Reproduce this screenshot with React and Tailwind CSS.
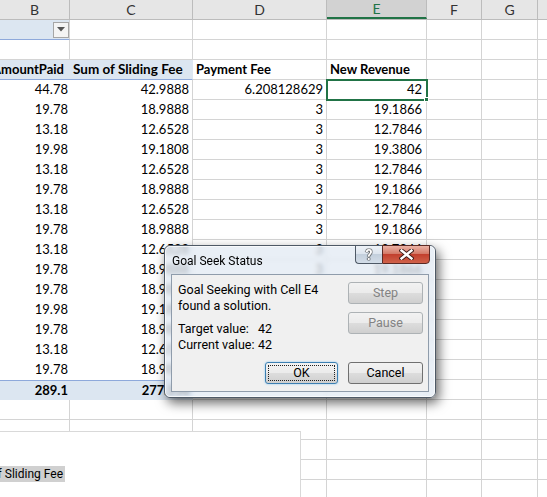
import React from 'react';

const W = ['w-[70px]', 'w-[123px]', 'w-[134px]', 'w-[100px]', 'w-[55px]', 'w-[56px]', 'w-[60px]'];
const LETTERS = ['B', 'C', 'D', 'E', 'F', 'G', 'H'];

const data = [
  ['44.78', '42.9888', '6.208128629', '42'],
  ['19.78', '18.9888', '3', '19.1866'],
  ['13.18', '12.6528', '3', '12.7846'],
  ['19.98', '19.1808', '3', '19.3806'],
  ['13.18', '12.6528', '3', '12.7846'],
  ['19.78', '18.9888', '3', '19.1866'],
  ['13.18', '12.6528', '3', '12.7846'],
  ['19.78', '18.9888', '3', '19.1866'],
  ['13.18', '12.6528', '3', '12.7846'],
  ['19.78', '18.9888', '3', '19.1866'],
  ['19.78', '18.9888', '3', '19.1866'],
  ['19.98', '19.1808', '3', '19.3806'],
  ['19.78', '18.9888', '3', '19.1866'],
  ['13.18', '12.6528', '3', '12.7846'],
  ['19.78', '18.9888', '3', '19.1866'],
];

function Cell({ i, children, className = '', grid = true }) {
  return (
    <div
      className={`${W[i]} shrink-0 h-[20px] flex items-center px-[3px] whitespace-nowrap overflow-hidden ${
        grid ? 'border-r border-b border-[#d4d4d4]' : ''
      } ${className}`}
    >
      {children}
    </div>
  );
}

function PlainRow() {
  return (
    <div className="flex">
      {W.map((_, i) => (
        <Cell key={i} i={i} />
      ))}
    </div>
  );
}

function WinButton({ children, disabled, isDefault, className = '' }) {
  const border = isDefault
    ? 'border-[#3c7fb1] shadow-[0_0_2px_#7ec3f0]'
    : disabled
    ? 'border-[#adb2b5]'
    : 'border-[#707070]';
  return (
    <div
      className={`h-[22px] rounded-[3px] border ${border} bg-[linear-gradient(#f2f2f2_0%,#ebebeb_50%,#dddddd_50%,#cfcfcf_100%)] flex items-center justify-center p-[2px] ${className} ${
        disabled ? 'text-[#838383]' : 'text-black'
      }`}
    >
      {isDefault ? (
        <div className="w-full h-full flex items-center justify-center border border-dotted border-[#202020]">
          {children}
        </div>
      ) : (
        children
      )}
    </div>
  );
}

export default function App() {
  return (
    <div className="relative w-[547px] h-[497px] overflow-hidden bg-white text-[13px] text-black [font-family:Lato,sans-serif]">
      {/* column headers */}
      <div className="flex h-[20px] bg-[#e6e6e6] border-b border-[#bcbcbc]">
        {LETTERS.map((l, i) => (
          <div
            key={l}
            className={`${W[i]} shrink-0 h-full flex items-center justify-center border-r border-[#bcbcbc] text-[14px] ${
              l === 'E'
                ? 'bg-[#d2d2d2] text-[#217346] border-b-2 border-b-[#217346]'
                : 'text-[#333]'
            }`}
          >
            {l}
          </div>
        ))}
      </div>

      {/* row 1: filter */}
      <div className="flex">
        <Cell i={0} grid={false} className="bg-[#dce6f1] border-b border-b-[#8ea9db] border-r border-r-[#d4d4d4] justify-end !px-0">
          <div className="w-[16px] h-[16px] border border-[#a6a6a6] bg-[#f4f4f4] flex items-center justify-center">
            <svg width="8" height="5" viewBox="0 0 8 5">
              <path d="M0 0 L8 0 L4 4.5 Z" fill="#555" />
            </svg>
          </div>
        </Cell>
        {W.slice(1).map((_, k) => (
          <Cell key={k} i={k + 1} />
        ))}
      </div>
      <PlainRow />

      {/* pivot header row */}
      <div className="flex font-bold">
        <Cell i={0} grid={false} className="bg-[#dce6f1] border-b border-[#8ea9db] justify-end !pr-[6px]">
          Sum of AmountPaid
        </Cell>
        <Cell i={1} grid={false} className="bg-[#dce6f1] border-b border-[#8ea9db] border-r border-r-[#dce6f1] text-[13.5px]">
          Sum of Sliding Fee
        </Cell>
        <Cell i={2}>Payment Fee</Cell>
        <Cell i={3}>New Revenue</Cell>
        <Cell i={4} />
        <Cell i={5} />
        <Cell i={6} />
      </div>

      {/* data rows */}
      {data.map((r, idx) => (
        <div key={idx} className="flex">
          <Cell i={0} grid={false} className="justify-end !pr-[2px]">
            {r[0]}
          </Cell>
          <Cell i={1} grid={false} className="justify-end border-r border-[#d4d4d4]">
            {r[1]}
          </Cell>
          <Cell i={2} className="justify-end">
            {r[2]}
          </Cell>
          <Cell i={3} className="justify-end !pr-[4px]">
            {r[3]}
          </Cell>
          <Cell i={4} />
          <Cell i={5} />
          <Cell i={6} />
        </div>
      ))}

      {/* grand total row */}
      <div className="flex">
        <Cell i={0} grid={false} className="bg-[#dce6f1] border-t border-[#8ea9db] justify-end font-bold !pr-[2px]">
          289.1
        </Cell>
        <Cell i={1} grid={false} className="bg-[#dce6f1] border-t border-[#8ea9db] justify-end font-bold">
          277.536
        </Cell>
        <Cell i={2} />
        <Cell i={3} />
        <Cell i={4} />
        <Cell i={5} />
        <Cell i={6} />
      </div>
      <PlainRow />
      <PlainRow />
      <PlainRow />
      <PlainRow />
      <PlainRow />

      {/* selected cell E4 */}
      <div className="absolute left-[326px] top-[79px] w-[102px] h-[22px] border-2 border-[#217346]" />
      <div className="absolute left-[424px] top-[97px] w-[5px] h-[5px] bg-[#217346] border border-white" />

      {/* embedded chart (partial) */}
      <div className="absolute left-0 top-[431px] w-[301px] h-[80px] bg-white border-t border-r border-[#d9d9d9]">
        <div className="mt-[34px] w-[65px] h-[16px] bg-[#d0d0d0] flex items-center justify-end pr-[2px] overflow-hidden whitespace-nowrap text-[12px] [font-family:Roboto,sans-serif]">
          Sum of Sliding Fee
        </div>
      </div>

      {/* Goal Seek Status dialog */}
      <div className="absolute left-[164px] top-[245px] w-[272px] h-[153px] rounded-[6px] border border-[#4e5966] bg-[rgba(225,233,242,0.72)] backdrop-blur-[2px] shadow-[3px_5px_12px_rgba(0,0,0,0.6)] flex flex-col [font-family:Roboto,sans-serif] text-[12.5px]">
        <div className="absolute inset-0 rounded-[5px] border border-[rgba(255,255,255,0.7)] pointer-events-none" />
        <div className="relative h-[28px] flex items-start justify-between">
          <div className="pl-[7px] pt-[6px] text-[12px] text-black">Goal Seek Status</div>
          <div className="flex mr-[5px] -mt-[1px]">
            <div className="w-[27px] h-[19px] border border-[#4e5966] border-r-0 rounded-bl-[4px] bg-[linear-gradient(#eef2f7_0%,#dde5ee_45%,#c3cfdc_50%,#d3dde8_100%)] flex items-center justify-center">
              <span className="text-white font-bold text-[14px] leading-none [text-shadow:0_0_1px_#222,0_0_1px_#222,0_0_1px_#222,0_0_1px_#222]">?</span>
            </div>
            <div className="w-[48px] h-[19px] border border-[#5a2a25] rounded-br-[4px] bg-[linear-gradient(#eab2a5_0%,#d47a68_45%,#c2402e_50%,#d0624a_100%)] flex items-center justify-center">
              <svg width="15" height="11" viewBox="0 0 15 11">
                <path
                  d="M2.5 1.5 L12.5 9.5 M12.5 1.5 L2.5 9.5"
                  stroke="#3b1a16"
                  strokeWidth="4.2"
                  strokeLinecap="square"
                />
                <path
                  d="M2.5 1.5 L12.5 9.5 M12.5 1.5 L2.5 9.5"
                  stroke="#ffffff"
                  strokeWidth="2.4"
                  strokeLinecap="square"
                />
              </svg>
            </div>
          </div>
        </div>
        <div className="relative flex-1 mx-[6px] mb-[5px] border border-[#8f9cab] bg-[#f0f0f0] flex flex-col pt-[7px] pb-[7px] pl-[6px] pr-[5px]">
          <div className="flex justify-between">
            <div className="leading-[16px] text-black text-[12.5px] shrink-0">
              <div>Goal Seeking with Cell E4</div>
              <div>found a solution.</div>
              <div className="mt-[7px] flex">
                <span className="w-[80px] shrink-0">Target value:</span>
                <span>42</span>
              </div>
              <div className="flex">
                <span className="w-[80px] shrink-0">Current value:</span>
                <span>42</span>
              </div>
            </div>
            <div className="flex flex-col gap-[8px] shrink-0">
              <WinButton disabled className="w-[75px]">Step</WinButton>
              <WinButton disabled className="w-[75px]">Pause</WinButton>
            </div>
          </div>
          <div className="mt-auto flex justify-end gap-[10px]">
            <WinButton isDefault className="w-[73px]">OK</WinButton>
            <WinButton className="w-[75px]">Cancel</WinButton>
          </div>
        </div>
      </div>
    </div>
  );
}
